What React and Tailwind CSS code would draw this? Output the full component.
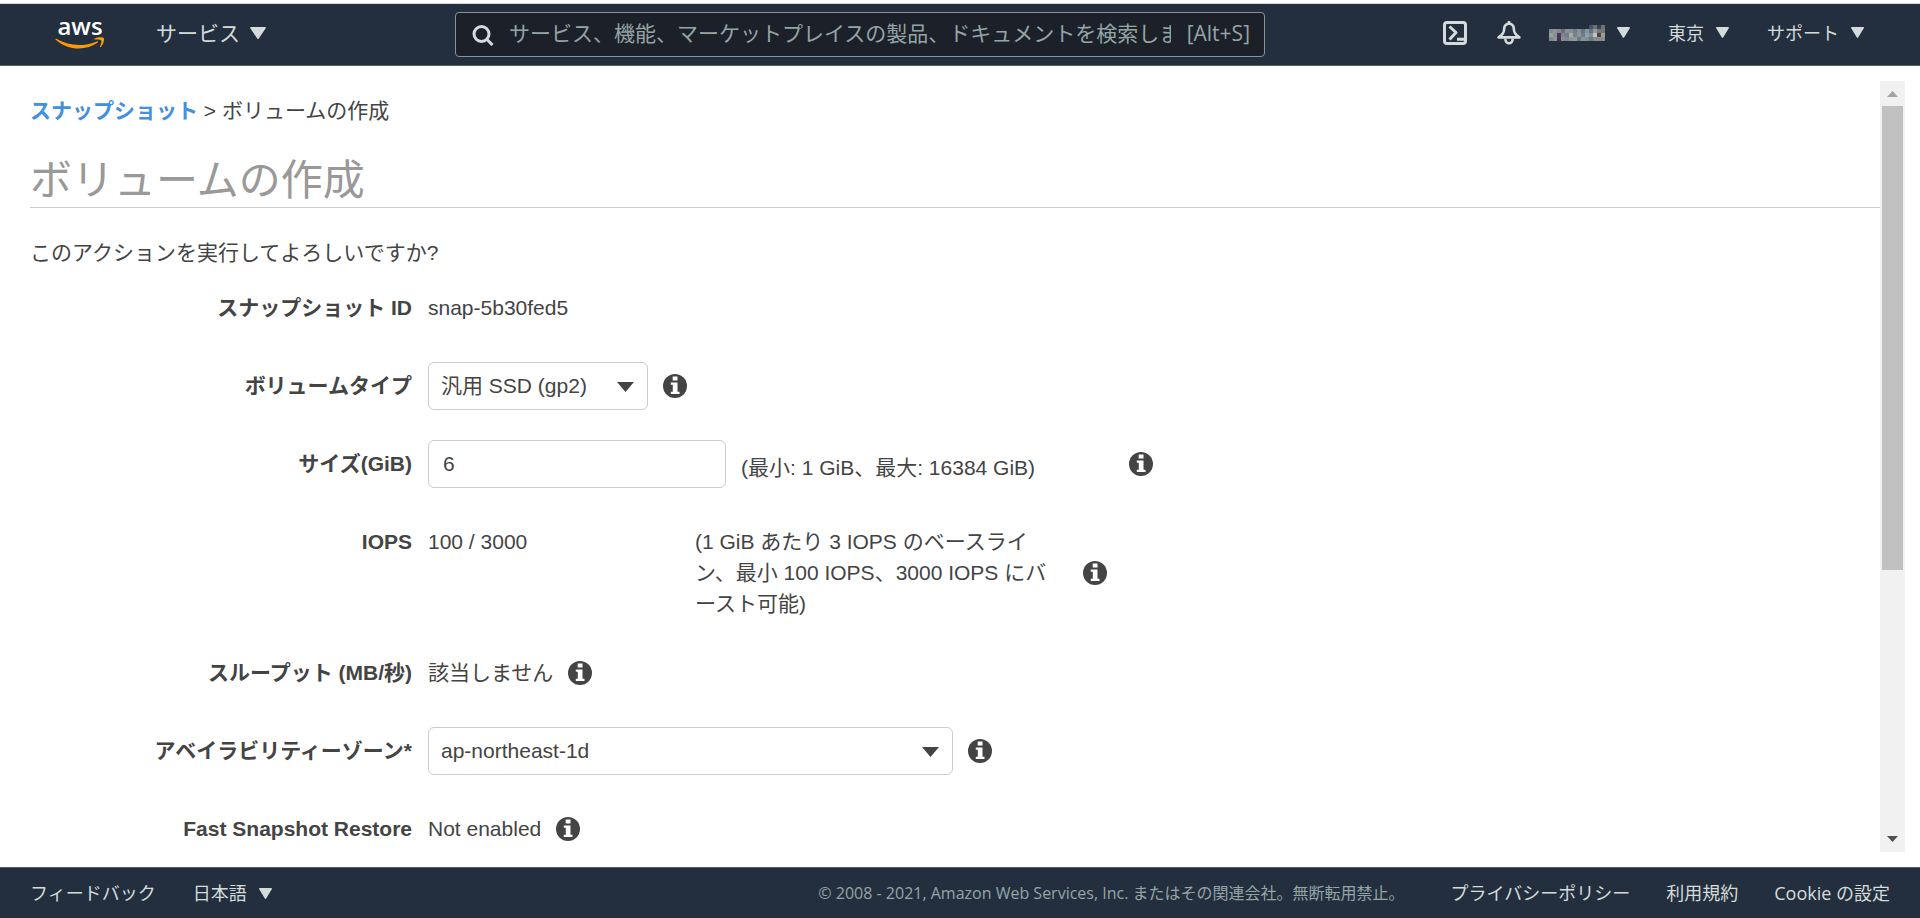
import { useState } from 'react';

/* ── Data ── */
const volumeTypes = ['汎用 SSD (gp2)', '汎用 SSD (gp3)', 'プロビジョンド IOPS SSD (io1)', 'マグネティック (standard)'];
const zones = ['ap-northeast-1d', 'ap-northeast-1a', 'ap-northeast-1c'];

// Masked account name, one colour per 4px cell
const maskRows = [
  ['', '', '', '', '', '', '', '', '', '', '#3d5570', '#736d69', '#2f4256', '#6c737b'],
  ['#838a91', '#8b9299', '#7d8790', '#746e6b', '#8b8f97', '#8d8c90', '#6e7e8c', '#8b8f98', '#657487', '#8693a0', '#5f7585', '#98989a', '#7b7575', '#7b7477'],
  ['#9c9ea0', '#82948f', '#4a3560', '#80828d', '#6d7f8c', '#aaa9aa', '#70828f', '#8f9192', '#6e7d8d', '#8f9fae', '#7d8c99', '#c5c2be', '#4c4442', '#9b9b9b'],
  ['#83898b', '#8f9391', '#43325a', '#8b908e', '#7b8791', '#8f9698', '#969b99', '#69798a', '#8d9294', '#7f8d99', '#6c7c7b', '#868b8b', '#8a8d8b', '#858c89'],
];

/* ── Icons ── */
function AwsLogo() {
  return (
    <svg width="50" height="56" viewBox="0 -11 50 56" role="img" aria-label="aws">
      <text x="25" y="19" textAnchor="middle" fontSize="24" fontWeight="600" fill="#fff" className="font-['Open_Sans',sans-serif]">aws</text>
      <path d="M.4 23.200c.3-.5.8-.5 1.400-.1C8.500 27 16 29 24.300 29c5.700 0 12-1.200 17.700-3.600.9-.4 1.600.6.8 1.200C37.600 30.500 30.300 32.500 24 32.500c-9 0-17.100-3.300-23.200-8.800-.3-.2-.4-.4-.4-.5z" fill="#f90" />
      <path d="M39.500 23.600c-.5-.4-.2-.9.200-1.100 2.500-1.700 8-1.700 9-.6 1 1.200-.2 6.700-3 9.100-.5.400-1 .200-.700-.4.700-1.700 1.900-5.100 1.300-6-.7-.9-4.400-.8-6.800-1z" fill="#f90" />
    </svg>
  );
}

function Triangle({ large }) {
  return (
    <svg className={large ? 'w-4 h-3' : 'w-[13px] h-[11px]'} viewBox="0 0 16 12" preserveAspectRatio="none" aria-hidden="true">
      <path d="M.8 0h14.400q1 .3.500 1.300L8.800 11.400q-.8 1-1.600 0L.3 1.300Q-.2.3.8 0z" fill="#d5dbdb" />
    </svg>
  );
}

function SearchIcon() {
  return (
    <svg width="22" height="22" viewBox="0 0 22 22" fill="none" stroke="#d5dbdb" strokeWidth="3" className="shrink-0" aria-hidden="true">
      <circle cx="9.500" cy="10" r="7.500" />
      <path d="M14.500 15l6 6" />
    </svg>
  );
}

function ShellIcon() {
  return (
    <svg width="24" height="24" viewBox="0 0 24 24" fill="none" stroke="#d5dbdb" strokeWidth="3" strokeLinejoin="round" aria-hidden="true">
      <rect x="1.500" y="1.500" width="21" height="21" rx="2.500" />
      <path d="M6.500 5.500l6.500 6-6.500 7M14 18.300h7" />
    </svg>
  );
}

function BellIcon() {
  return (
    <svg width="24" height="24" viewBox="0 0 24 24" fill="none" stroke="#d5dbdb" strokeWidth="2.600" strokeLinejoin="round" aria-hidden="true">
      <path d="M12 2.400C9 3 7.200 5 7.200 7.600c0 4-1.400 5.600-5.600 8.800h20.800c-4.200-3.200-5.600-4.800-5.600-8.800 0-2.600-1.800-4.600-4.800-5.200z" />
      <path d="M12 0v3M8.300 17.500c0 6.400 7.400 6.400 7.400 0" />
    </svg>
  );
}

function MaskedName() {
  return (
    <svg width="56" height="16" viewBox="0 0 56 16" shapeRendering="crispEdges" aria-hidden="true">
      {maskRows.map((row, y) =>
        row.map((fill, x) => fill && <rect key={`${x}-${y}`} x={x * 4} y={y * 4} width="4" height="4" fill={fill} />)
      )}
    </svg>
  );
}

function InfoButton({ label }) {
  return (
    <button type="button" aria-label={label} className="shrink-0">
      <svg width="24" height="24" viewBox="0 0 24 24" className="block">
        <circle cx="12" cy="12" r="12" fill="#444" />
        <path d="M9.700 2.500h4.800v4H9.700zM7.800 8.500h6.700v9.300h2V20H7.800v-2.200h2v-7h-2z" fill="#fff" />
      </svg>
    </button>
  );
}

/* ── UI Components ── */
function NavButton({ children, label }) {
  return (
    <button type="button" aria-label={label} className="flex items-center gap-3 text-lg leading-7 whitespace-nowrap">
      {children}
      <Triangle />
    </button>
  );
}

function Row({ label, htmlFor, children }) {
  const Label = htmlFor ? 'label' : 'div';
  return (
    <div className="flex items-start gap-4">
      <Label htmlFor={htmlFor} className="w-[382px] shrink-0 py-2 text-right font-bold">{label}</Label>
      {children}
    </div>
  );
}

function Select({ id, options, width }) {
  const [value, setValue] = useState(options[0]);
  return (
    <div className={`relative ${width}`}>
      <select
        id={id}
        value={value}
        onChange={(e) => setValue(e.target.value)}
        className="w-full h-12 appearance-none rounded-md border border-[#ccc] bg-white pl-3 pr-12"
      >
        {options.map((o) => <option key={o}>{o}</option>)}
      </select>
      <svg className="absolute right-3.5 top-5 pointer-events-none" width="17" height="10" viewBox="0 0 17 10" aria-hidden="true">
        <path d="M0 0h17L8.500 10z" fill="#444" />
      </svg>
    </div>
  );
}

function ScrollRail() {
  return (
    <div className="flex w-[25px] shrink-0 flex-col bg-[#f1f1f1]" aria-hidden="true">
      <div className="flex h-[25px] items-center justify-center">
        <svg width="11" height="6" viewBox="0 0 11 6"><path d="M5.500 0L11 6H0z" fill="#a3a3a3" /></svg>
      </div>
      <div className="flex-1 px-0.5">
        <div className="h-[64.4%] bg-[#c1c1c1]" />
      </div>
      <div className="flex h-[25px] items-center justify-center pb-0.5">
        <svg width="11" height="6" viewBox="0 0 11 6"><path d="M0 0h11L5.500 6z" fill="#505050" /></svg>
      </div>
    </div>
  );
}

function Header() {
  return (
    <header className="mt-[3px] flex h-[63px] shrink-0 items-center border-t border-b border-t-[#d5dbdb] border-b-[#545b64] bg-[#232f3e] pl-[55px] pr-14 pb-1 text-[#d5dbdb] font-['Open_Sans','Noto_Sans_CJK_JP',sans-serif]">
      <a href="#home" className="shrink-0"><AwsLogo /></a>
      <button type="button" className="ml-[51px] flex items-center gap-2.5 text-[21px] leading-8 whitespace-nowrap">
        サービス
        <Triangle large />
      </button>
      <label className="ml-[189px] mt-1 flex h-[45px] w-[810px] items-center rounded-sm border border-[#879596] bg-[#1b2029] pl-4 pr-3.5 text-[21px] leading-8 text-[#95a5a6]">
        <SearchIcon />
        <input
          type="text"
          aria-label="検索"
          placeholder="サービス、機能、マーケットプレイスの製品、ドキュメントを検索します"
          className="ml-[15px] mb-1 min-w-0 flex-1 bg-transparent outline-none placeholder:text-[#95a5a6]"
        />
        <span className="ml-4 mb-1 font-medium">[Alt+S]</span>
      </label>
      <nav className="ml-auto flex items-center">
        <button type="button" aria-label="CloudShell"><ShellIcon /></button>
        <button type="button" aria-label="通知" className="ml-[30px] mr-7"><BellIcon /></button>
        <div className="flex items-center gap-[38px]">
          <NavButton label="アカウント"><MaskedName /></NavButton>
          <NavButton>東京</NavButton>
          <NavButton>サポート</NavButton>
        </div>
      </nav>
    </header>
  );
}

function Footer() {
  return (
    <footer className="flex h-[51px] shrink-0 items-center border-t border-[#545b64] bg-[#232f3e] px-[30px] text-lg leading-7 text-[#d5dbdb] whitespace-nowrap font-['Open_Sans','Noto_Sans_CJK_JP',sans-serif]">
      <a href="#feedback">フィードバック</a>
      <div className="ml-[37px]"><NavButton>日本語</NavButton></div>
      <p className="ml-auto text-[16px] text-[#95a5a6]">© 2008 - 2021, Amazon Web Services, Inc. またはその関連会社。無断転用禁止。</p>
      <a href="#privacy" className="ml-[46px]">プライバシーポリシー</a>
      <a href="#terms" className="ml-9">利用規約</a>
      <a href="#cookies" className="ml-9">Cookie の設定</a>
    </footer>
  );
}

export default function App() {
  const [size, setSize] = useState('6');

  return (
    <div className="flex h-screen flex-col bg-white text-[21px] leading-8 text-[#444] font-['Liberation_Sans','Noto_Sans_CJK_JP',sans-serif]">
      <Header />

      <div className="flex min-h-0 flex-1 py-[15px] pl-[30px] pr-[15px]">
        <main className="min-w-0 flex-1 overflow-hidden">
          <nav className="mt-3.5">
            <a href="#snapshots" className="font-bold text-[#438fe0]">スナップショット</a> &gt; ボリュームの作成
          </nav>
          <h1 className="mt-6 h-[57px] border-b border-[#ccc] text-[42px] leading-[60px] text-[#999]">ボリュームの作成</h1>
          <p className="mt-[29px]">このアクションを実行してよろしいですか?</p>

          <form className="mt-[15px] flex flex-col gap-[30px]">
            <Row label="スナップショット ID">
              <div className="py-2">snap-5b30fed5</div>
            </Row>

            <Row label="ボリュームタイプ" htmlFor="volume-type">
              <div className="flex items-center gap-[15px]">
                <Select id="volume-type" options={volumeTypes} width="w-[220px]" />
                <InfoButton label="ボリュームタイプの情報" />
              </div>
            </Row>

            <Row label="サイズ(GiB)" htmlFor="size">
              <div className="flex items-center">
                <input
                  id="size"
                  value={size}
                  onChange={(e) => setSize(e.target.value)}
                  className="h-12 w-[298px] rounded-md border border-[#ccc] px-3.5"
                />
                <span className="ml-[15px] w-[388px] pt-2">(最小: 1 GiB、最大: 16384 GiB)</span>
                <InfoButton label="サイズの情報" />
              </div>
            </Row>

            <Row label="IOPS">
              <div className="w-[251px] py-2">100 / 3000</div>
              <div className="flex items-center gap-8 pt-2 leading-[31px]">
                <div className="w-[356px] [line-break:loose]">(1 GiB あたり 3 IOPS のベースライン、最小 100 IOPS、3000 IOPS にバースト可能)</div>
                <InfoButton label="IOPS の情報" />
              </div>
            </Row>

            <Row label="スループット (MB/秒)">
              <div className="flex items-center gap-[15px] py-2">
                該当しません
                <InfoButton label="スループットの情報" />
              </div>
            </Row>

            <Row label="アベイラビリティーゾーン*" htmlFor="zone">
              <div className="flex items-center gap-[15px]">
                <Select id="zone" options={zones} width="w-[525px]" />
                <InfoButton label="アベイラビリティーゾーンの情報" />
              </div>
            </Row>

            <Row label="Fast Snapshot Restore">
              <div className="flex items-center gap-[15px] py-2">
                Not enabled
                <InfoButton label="Fast Snapshot Restore の情報" />
              </div>
            </Row>
          </form>
        </main>
        <ScrollRail />
      </div>

      <Footer />
    </div>
  );
}
